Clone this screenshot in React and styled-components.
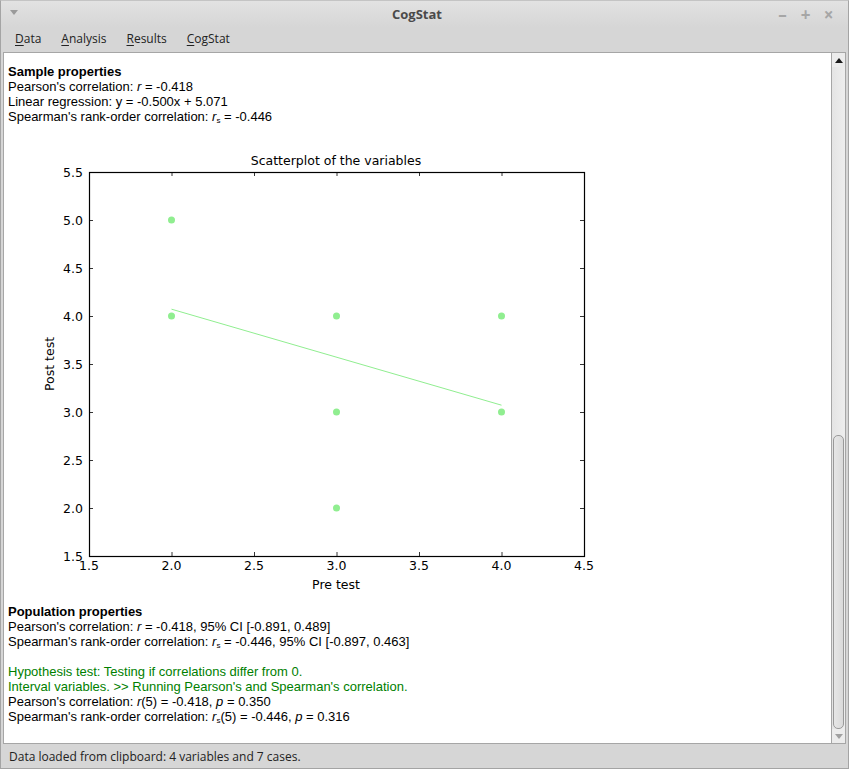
import styled, { createGlobalStyle } from "styled-components";

const GlobalStyle = createGlobalStyle`
  html, body {
    margin: 0;
    padding: 0;
    background: #d6d6d6;
  }
  #root {
    height: 100vh;
  }
`;

const Window = styled.div`
  box-sizing: border-box;
  height: 100vh;
  display: flex;
  flex-direction: column;
  background: #d6d6d6;
  border: 1px solid #a4a4a4;
  border-top-color: #c4c4c4;
  font-family: "Open Sans", "Noto Sans", sans-serif;
`;

const TitleBar = styled.div`
  height: 26px;
  flex: none;
  display: flex;
  align-items: center;
  background: linear-gradient(#e2e2e2, #d6d6d6);
  padding: 0 9px 0 9px;
`;

const Title = styled.div`
  flex: 1;
  text-align: center;
  font-size: 13px;
  font-weight: bold;
  color: #4a4a4a;
  padding-left: 40px;
`;

const MenuTriangle = styled.div`
  width: 0;
  height: 0;
  border-left: 4px solid transparent;
  border-right: 4px solid transparent;
  border-top: 5px solid #9a9a9a;
  margin-top: -3px;
`;

const WinButtons = styled.div`
  display: flex;
  gap: 10px;
  color: #a6a6a6;
  font-size: 17px;
  font-weight: bold;
  align-items: center;
  margin-right: 4px;
`;

const WinButton = styled.span`
  width: 13px;
  text-align: center;
`;

const MenuBar = styled.div`
  box-sizing: border-box;
  height: 25px;
  flex: none;
  display: flex;
  align-items: center;
  gap: 20px;
  padding: 0 14px 3px 14px;
  font-size: 12px;
  color: #222;
`;

const MenuItem = styled.span`
  u {
    text-decoration: underline;
    text-underline-offset: 2px;
  }
`;

const Body = styled.div`
  flex: 1;
  min-height: 0;
  display: flex;
  margin: 0 2px 0 2px;
  border: 1px solid #a6a6a6;
  background: #fff;
`;

const Content = styled.div`
  flex: 1;
  padding: 11px 4px 0 4px;
  font-family: "Liberation Sans", Arial, sans-serif;
  font-size: 13px;
  line-height: 15px;
  color: #000;
  overflow: hidden;
`;

const Line = styled.div`
  font-weight: ${(p) => (p.bold ? "bold" : "normal")};
  color: ${(p) => (p.green ? "#008000" : "#000")};
  min-height: 15px;

  sub {
    font-size: 8px;
    vertical-align: -2px;
    line-height: 0;
  }
`;

const Section = styled.div`
  margin-top: ${(p) => p.gap || 0}px;
`;

const Chart = styled.svg`
  display: block;
  margin-top: 11px;
  font-family: "DejaVu Sans", sans-serif;
`;

const ScrollBar = styled.div`
  width: 13px;
  flex: none;
  display: flex;
  flex-direction: column;
  border-left: 1px solid #a6a6a6;
  background: linear-gradient(90deg, #e4e4e4, #eeeeee);
`;

const Arrow = styled.div`
  height: 14px;
  flex: none;
  display: flex;
  align-items: center;
  justify-content: center;
  background: #ececec;
`;

const ArrowShape = styled.div`
  width: 0;
  height: 0;
  border-left: 4px solid transparent;
  border-right: 4px solid transparent;
  ${(p) =>
    p.down
      ? "border-top: 5px solid #a0a0a0;"
      : "border-bottom: 5px solid #1a1a1a;"}
`;

const Track = styled.div`
  flex: 1;
  display: flex;
  flex-direction: column;
  justify-content: flex-end;
  padding: 0 1px 0 1px;
`;

const Thumb = styled.div`
  height: 292px;
  border: 1px solid #9a9a9a;
  border-radius: 5px;
  background: linear-gradient(90deg, #e6e6e6, #dadada);
`;

const StatusBar = styled.div`
  height: 24px;
  flex: none;
  display: flex;
  align-items: center;
  padding: 0 8px;
  font-size: 12px;
  color: #222;
`;

const Rs = () => (
  <>
    <i>r</i>
    <sub>s</sub>
  </>
);

const X0 = 81;
const Y0 = 421;
const sx = (v) => X0 + (v - 1.5) * 165;
const sy = (v) => Y0 - (v - 1.5) * 96;
const ticks = [1.5, 2, 2.5, 3, 3.5, 4, 4.5];
const yTicks = [1.5, 2, 2.5, 3, 3.5, 4, 4.5, 5, 5.5];
const points = [
  [2, 5],
  [2, 4],
  [3, 4],
  [3, 3],
  [3, 2],
  [4, 4],
  [4, 3],
];

const Scatter = () => (
  <Chart width="600" height="460" viewBox="0 0 600 460">
    <text x="328" y="30" fontSize="12.5" textAnchor="middle" fill="#000">
      Scatterplot of the variables
    </text>
    <line
      x1={sx(2)}
      y1={sy(4.071)}
      x2={sx(4)}
      y2={sy(3.071)}
      stroke="#90ee90"
      strokeWidth="1"
    />
    {points.map(([x, y], i) => (
      <circle key={i} cx={sx(x)} cy={sy(y)} r="3.5" fill="#90ee90" />
    ))}
    <rect
      x={X0 + 0.5}
      y={sy(5.5) + 0.5}
      width={495}
      height={384}
      fill="none"
      stroke="#000"
      strokeWidth="1.2"
    />
    {ticks.map((t) => (
      <g key={"x" + t}>
        <line x1={sx(t) + 0.5} y1={Y0} x2={sx(t) + 0.5} y2={Y0 - 4} stroke="#000" strokeWidth="0.8" />
        <line x1={sx(t) + 0.5} y1={sy(5.5)} x2={sx(t) + 0.5} y2={sy(5.5) + 4} stroke="#000" strokeWidth="0.8" />
        <text x={sx(t)} y={Y0 + 14} fontSize="12.5" textAnchor="middle" fill="#000">
          {t.toFixed(1)}
        </text>
      </g>
    ))}
    {yTicks.map((t) => (
      <g key={"y" + t}>
        <line x1={X0} y1={sy(t) + 0.5} x2={X0 + 4} y2={sy(t) + 0.5} stroke="#000" strokeWidth="0.8" />
        <line x1={X0 + 495} y1={sy(t) + 0.5} x2={X0 + 491} y2={sy(t) + 0.5} stroke="#000" strokeWidth="0.8" />
        <text x={X0 - 6} y={sy(t) + 5} fontSize="12.5" textAnchor="end" fill="#000">
          {t.toFixed(1)}
        </text>
      </g>
    ))}
    <text x="328" y="454" fontSize="12.5" textAnchor="middle" fill="#000">
      Pre test
    </text>
    <text
      x="0"
      y="0"
      fontSize="12.5"
      textAnchor="middle"
      fill="#000"
      transform="translate(45.5 229) rotate(-90)"
    >
      Post test
    </text>
  </Chart>
);

export default function App() {
  return (
    <>
      <GlobalStyle />
      <Window>
        <TitleBar>
          <MenuTriangle />
          <Title>CogStat</Title>
          <WinButtons>
            <WinButton>–</WinButton>
            <WinButton>+</WinButton>
            <WinButton>×</WinButton>
          </WinButtons>
        </TitleBar>
        <MenuBar>
          <MenuItem>
            <u>D</u>ata
          </MenuItem>
          <MenuItem>
            <u>A</u>nalysis
          </MenuItem>
          <MenuItem>
            <u>R</u>esults
          </MenuItem>
          <MenuItem>
            <u>C</u>ogStat
          </MenuItem>
        </MenuBar>
        <Body>
          <Content>
            <Section>
              <Line bold>Sample properties</Line>
              <Line>
                Pearson's correlation: <i>r</i> = -0.418
              </Line>
              <Line>Linear regression: y = -0.500x + 5.071</Line>
              <Line>
                Spearman's rank-order correlation: <Rs /> = -0.446
              </Line>
            </Section>
            <Scatter />
            <Section gap={9}>
              <Line bold>Population properties</Line>
              <Line>
                Pearson's correlation: <i>r</i> = -0.418, 95% CI [-0.891, 0.489]
              </Line>
              <Line>
                Spearman's rank-order correlation: <Rs /> = -0.446, 95% CI
                [-0.897, 0.463]
              </Line>
              <Line />
              <Line green>Hypothesis test: Testing if correlations differ from 0.</Line>
              <Line green>
                Interval variables. &gt;&gt; Running Pearson's and Spearman's
                correlation.
              </Line>
              <Line>
                Pearson's correlation: <i>r</i>(5) = -0.418, <i>p</i> = 0.350
              </Line>
              <Line>
                Spearman's rank-order correlation: <Rs />
                (5) = -0.446, <i>p</i> = 0.316
              </Line>
            </Section>
          </Content>
          <ScrollBar>
            <Arrow>
              <ArrowShape />
            </Arrow>
            <Track>
              <Thumb />
            </Track>
            <Arrow>
              <ArrowShape down />
            </Arrow>
          </ScrollBar>
        </Body>
        <StatusBar>Data loaded from clipboard: 4 variables and 7 cases.</StatusBar>
      </Window>
    </>
  );
}
